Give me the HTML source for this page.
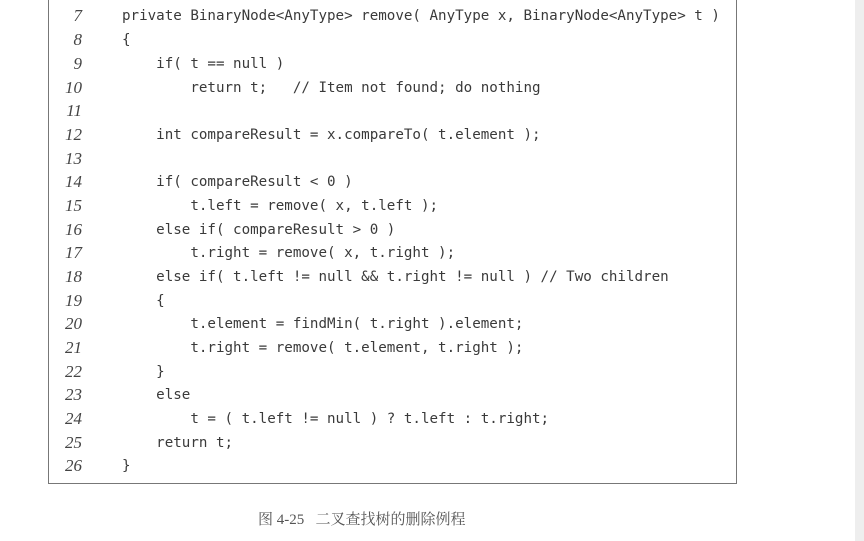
<!DOCTYPE html>
<html><head><meta charset="utf-8"><style>
body{margin:0;width:864px;height:541px;background:#fff;position:relative;overflow:hidden}
.strip{position:absolute;left:855px;top:0;width:9px;height:541px;background:#eeeeee}
.box{position:absolute;left:48px;top:-2px;width:687px;height:485px;border:1.5px solid #777;border-top:none}
.ln{position:absolute;left:0;width:82px;text-align:right;font-family:"Liberation Serif",serif;font-style:italic;font-size:17px;color:#444}
.c{position:absolute;left:122px;font-family:"DejaVu Sans Mono",monospace;font-size:14.2px;color:#3a3a3a;white-space:pre}
.cap{position:absolute;left:258px;top:508px;font-family:"Liberation Serif","Noto Serif CJK SC",serif;font-size:15px;color:#555;white-space:pre}
</style></head><body>
<div class="strip"></div>
<div class="box"></div>
<div class="ln" style="top:6px">7</div><div class="c" style="top:8px">private BinaryNode&lt;AnyType&gt; remove( AnyType x, BinaryNode&lt;AnyType&gt; t )</div>
<div class="ln" style="top:30px">8</div><div class="c" style="top:32px">{</div>
<div class="ln" style="top:54px">9</div><div class="c" style="top:56px">    if( t == null )</div>
<div class="ln" style="top:78px">10</div><div class="c" style="top:80px">        return t;   // Item not found; do nothing</div>
<div class="ln" style="top:101px">11</div>
<div class="ln" style="top:125px">12</div><div class="c" style="top:127px">    int compareResult = x.compareTo( t.element );</div>
<div class="ln" style="top:149px">13</div>
<div class="ln" style="top:172px">14</div><div class="c" style="top:174px">    if( compareResult &lt; 0 )</div>
<div class="ln" style="top:196px">15</div><div class="c" style="top:198px">        t.left = remove( x, t.left );</div>
<div class="ln" style="top:220px">16</div><div class="c" style="top:222px">    else if( compareResult &gt; 0 )</div>
<div class="ln" style="top:243px">17</div><div class="c" style="top:245px">        t.right = remove( x, t.right );</div>
<div class="ln" style="top:267px">18</div><div class="c" style="top:269px">    else if( t.left != null &amp;&amp; t.right != null ) // Two children</div>
<div class="ln" style="top:291px">19</div><div class="c" style="top:293px">    {</div>
<div class="ln" style="top:314px">20</div><div class="c" style="top:316px">        t.element = findMin( t.right ).element;</div>
<div class="ln" style="top:338px">21</div><div class="c" style="top:340px">        t.right = remove( t.element, t.right );</div>
<div class="ln" style="top:362px">22</div><div class="c" style="top:364px">    }</div>
<div class="ln" style="top:385px">23</div><div class="c" style="top:387px">    else</div>
<div class="ln" style="top:409px">24</div><div class="c" style="top:411px">        t = ( t.left != null ) ? t.left : t.right;</div>
<div class="ln" style="top:433px">25</div><div class="c" style="top:435px">    return t;</div>
<div class="ln" style="top:456px">26</div><div class="c" style="top:458px">}</div>
<div class="cap">图 4-25   二叉查找树的删除例程</div>
</body></html>
